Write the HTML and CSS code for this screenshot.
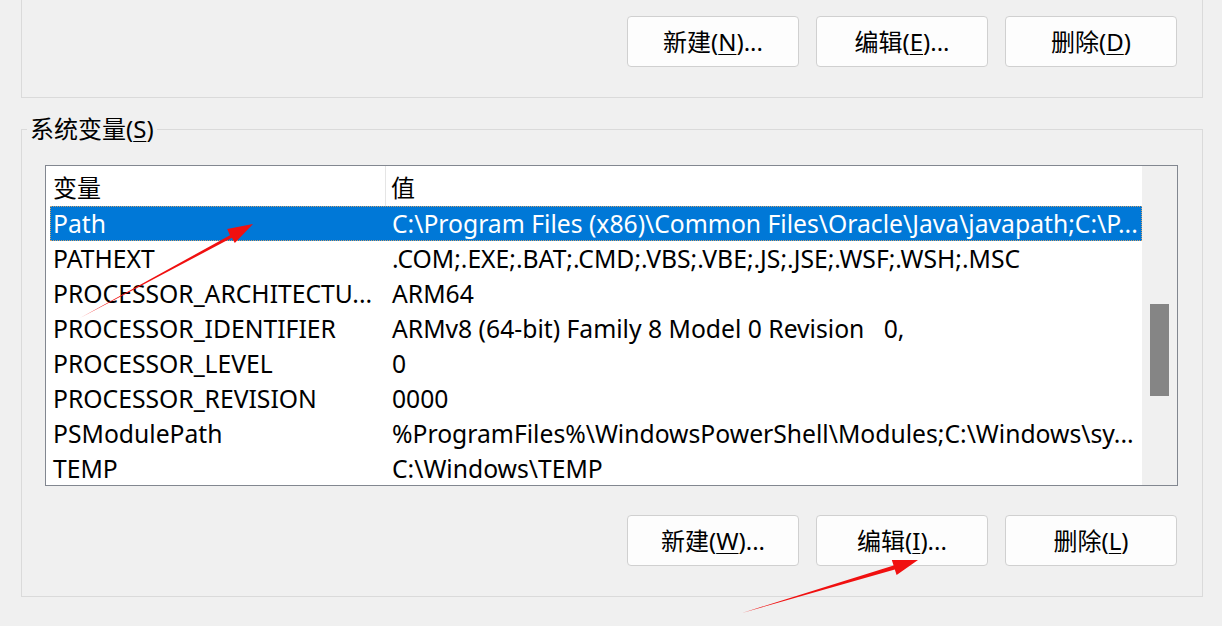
FILE: index.html
```html
<!DOCTYPE html>
<html lang="zh-CN">
<head>
<meta charset="utf-8">
<title>环境变量</title>
<link rel="stylesheet" href="styles.css">
</head>
<body>
<div class="page">
  <div class="user-group">
    <div class="btn-row">
      <button class="btn">新建(<u>N</u>)...</button>
      <button class="btn">编辑(<u>E</u>)...</button>
      <button class="btn">删除(<u>D</u>)</button>
    </div>
  </div>

  <fieldset class="sys-group">
    <legend class="sys-legend">系统变量(<u>S</u>)</legend>
    <div class="list">
      <div class="list-main">
        <div class="list-head">
          <div class="hcell hcell-name">变量</div>
          <div class="hcell hcell-value">值</div>
        </div>
        <div class="row selected"><span class="c-name">Path</span><span class="c-value">C:\Program Files (x86)\Common Files\Oracle\Java\javapath;C:\P...</span></div>
        <div class="row"><span class="c-name">PATHEXT</span><span class="c-value">.COM;.EXE;.BAT;.CMD;.VBS;.VBE;.JS;.JSE;.WSF;.WSH;.MSC</span></div>
        <div class="row"><span class="c-name">PROCESSOR_ARCHITECTU...</span><span class="c-value">ARM64</span></div>
        <div class="row"><span class="c-name">PROCESSOR_IDENTIFIER</span><span class="c-value">ARMv8 (64-bit) Family 8 Model 0 Revision   0,</span></div>
        <div class="row"><span class="c-name">PROCESSOR_LEVEL</span><span class="c-value">0</span></div>
        <div class="row"><span class="c-name">PROCESSOR_REVISION</span><span class="c-value">0000</span></div>
        <div class="row"><span class="c-name">PSModulePath</span><span class="c-value">%ProgramFiles%\WindowsPowerShell\Modules;C:\Windows\sy...</span></div>
        <div class="row"><span class="c-name">TEMP</span><span class="c-value">C:\Windows\TEMP</span></div>
      </div>
      <div class="scrollbar"><div class="thumb"></div></div>
    </div>
    <div class="btn-row btn-row-bottom">
      <button class="btn">新建(<u>W</u>)...</button>
      <button class="btn">编辑(<u>I</u>)...</button>
      <button class="btn">删除(<u>L</u>)</button>
    </div>
  </fieldset>

  <svg class="arrows" width="1222" height="626" viewBox="0 0 1222 626" aria-hidden="true">
    <polygon fill="#f01010" points="80,318 230.0,235.2 227.2,229 253,224 234.8,243 231.9,237.8"/>
    <polygon fill="#f01010" points="742,613 893.6,565.6 891.8,559.9 918,560 896.6,575.1 894.8,569.4"/>
  </svg>
</div>
</body>
</html>
```

FILE: styles.css
```css
* { box-sizing: border-box; }

html, body {
  margin: 0;
  padding: 0;
  background: #f0f0f0;
}

body {
  font-family: "Noto Sans", "Noto Sans CJK SC", sans-serif;
  font-size: 24.7px;
  color: #000;
}

.page {
  position: relative;
  width: 1222px;
  height: 626px;
  overflow: hidden;
}

.user-group {
  margin-left: 21px;
  width: 1182px;
  height: 98px;
  border: 1px solid #dadada;
  border-top: none;
  padding: 16px 25px 0 0;
}

.btn-row {
  display: flex;
  justify-content: flex-end;
  gap: 17px;
}

.btn {
  width: 172px;
  height: 51px;
  background: #fdfdfd;
  border: 1px solid #d0d0d0;
  border-radius: 4px;
  font-family: "Noto Sans", "Noto Sans CJK SC", sans-serif;
  font-size: 24px;
  color: #000;
  padding: 0;
  line-height: 1;
}

.btn u {
  text-underline-offset: 3px;
  text-decoration-thickness: 1px;
}

.sys-group {
  margin: 16px 0 0 21px;
  width: 1182px;
  height: 483px;
  border: 1px solid #dadada;
  padding: 21px 25px 0 23px;
  min-width: 0;
}

.sys-legend {
  margin-left: -18px;
  padding: 0 3px;
  font-size: 24px;
  line-height: 30px;
}

.sys-legend u {
  text-underline-offset: 3px;
  text-decoration-thickness: 1px;
}

.list {
  display: flex;
  width: 1133px;
  height: 321px;
  border: 1px solid #828790;
  background: #fff;
  overflow: hidden;
}

.list-main {
  flex: 1;
  min-width: 0;
  overflow: hidden;
}

.list-head {
  display: flex;
  height: 40px;
  align-items: stretch;
}

.hcell {
  display: flex;
  align-items: center;
  font-size: 24px;
}

.hcell-name {
  width: 340px;
  padding-left: 7px;
  border-right: 1px solid #e5e5e5;
}

.hcell-value {
  padding-left: 5px;
}

.row {
  display: flex;
  align-items: center;
  height: 35px;
  margin-left: 4px;
  white-space: pre;
  border: 1px solid transparent;
}

.row.selected {
  background: #0078d7;
  color: #fff;
  border: 1px dotted #c8a070;
}

.c-name {
  width: 335px;
  padding-left: 2px;
  flex: none;
  overflow: hidden;
}

.c-value {
  padding-left: 6px;
  overflow: hidden;
}

.scrollbar {
  width: 35px;
  flex: none;
  background: #f0f0f0;
  padding: 138px 8px 0 8px;
}

.thumb {
  height: 92px;
  background: #858585;
}

.btn-row-bottom {
  margin-top: 29px;
}

.arrows {
  position: absolute;
  left: 0;
  top: 0;
  pointer-events: none;
}
```
